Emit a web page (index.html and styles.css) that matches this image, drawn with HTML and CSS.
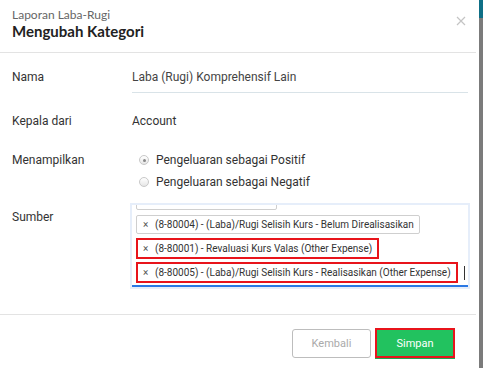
FILE: index.html
```html
<!DOCTYPE html>
<html lang="id">
<head>
<meta charset="utf-8">
<link rel="stylesheet" href="styles.css">
</head>
<body>
<div class="page">
  <div class="modal">
    <div class="modal-header">
      <div class="titles">
        <div class="subtitle">Laporan Laba-Rugi</div>
        <div class="title">Mengubah Kategori</div>
      </div>
      <svg class="close" width="10" height="10" viewBox="0 0 10 10"><path d="M1 1L9 9M9 1L1 9" stroke="#c4c4c4" stroke-width="1.2"/></svg>
    </div>
    <div class="modal-body">
      <div class="row row-nama">
        <div class="label">Nama</div>
        <div class="input">Laba (Rugi) Komprehensif Lain</div>
      </div>
      <div class="row row-kepala">
        <div class="label">Kepala dari</div>
        <div class="value">Account</div>
      </div>
      <div class="row row-tampil">
        <div class="label">Menampilkan</div>
        <div class="radios">
          <div class="radio-line"><span class="radio checked"></span>Pengeluaran sebagai Positif</div>
          <div class="radio-line"><span class="radio"></span>Pengeluaran sebagai Negatif</div>
        </div>
      </div>
      <div class="row row-sumber">
        <div class="label">Sumber</div>
        <div class="tagbox">
          <div class="tags">
            <div class="tag tag-hidden"></div>
            <div class="tag"><span class="x">×</span>(8-80004) - (Laba)/Rugi Selisih Kurs - Belum Direalisasikan</div>
            <div class="tag hl"><span class="x">×</span>(8-80001) - Revaluasi Kurs Valas (Other Expense)</div>
            <div class="tag-line">
              <div class="tag hl"><span class="x">×</span>(8-80005) - (Laba)/Rugi Selisih Kurs - Realisasikan (Other Expense)</div>
              <span class="caret"></span>
            </div>
          </div>
        </div>
      </div>
    </div>
    <div class="modal-footer">
      <button class="btn btn-back">Kembali</button>
      <button class="btn btn-save">Simpan</button>
    </div>
  </div>
  <div class="strip"></div>
</div>
</body>
</html>
```
FILE: styles.css
```css
* { box-sizing: border-box; }
html, body { margin: 0; padding: 0; background: #fff; }
body { font-family: Roboto, "Liberation Sans", sans-serif; color: #333; }
.page { display: flex; width: 483px; height: 368px; overflow: hidden; }
.modal { width: 479px; height: 368px; background: #fff; display: flex; flex-direction: column; }
.strip { width: 4px; height: 368px; background: linear-gradient(#0e6f86 0, #0e6f86 18px, #7b7b7b 18px); }

.modal-header {
  height: 53px; margin-right: 3px;
  border-bottom: 1px solid #e3e3e3;
  display: flex; justify-content: space-between; align-items: flex-start;
  padding: 8px 8px 0 12px;
}
.subtitle { font-family: Lato, "Open Sans", sans-serif; font-size: 12px; color: #666; line-height: 14px; }
.title { font-family: Lato, "Open Sans", sans-serif; font-size: 15px; font-weight: 700; color: #222; line-height: 18px; }
.close { margin-top: 8px; margin-right: 2px; }

.modal-body { flex: 1; padding: 9px 11px 0 12px; font-size: 12px; }
.row { display: flex; }
.label { width: 120px; flex: none; color: #333; }
.row-nama .label { line-height: 30px; }
.input { flex: 1; height: 31px; line-height: 30px; border-bottom: 1px solid #d9e3e8; color: #444; }
.row-kepala { margin-top: 18px; line-height: 20px; }
.value { color: #333; }
.row-tampil { margin-top: 18px; }
.row-tampil .label { line-height: 22px; }
.radio-line { display: flex; align-items: center; height: 22px; padding-left: 7px; color: #333; }
.radio { width: 10px; height: 10px; border-radius: 50%; border: 1px solid #c8c8c8; background: linear-gradient(#fff, #e6e6e6); margin-right: 7px; position: relative; }
.radio.checked::after { content: ""; position: absolute; left: 2.5px; top: 2.5px; width: 3px; height: 3px; border-radius: 50%; background: #888; }

.row-sumber { margin-top: 12px; }
.row-sumber .label { line-height: 24px; }
.tagbox {
  width: 336px; height: 82px;
  box-shadow: 0 0 0 2px #e6eefa;
  border-bottom: 2px solid #2a78e4;
  overflow: hidden; padding: 0 4px;
}
.tags { margin-top: -14px; display: flex; flex-direction: column; align-items: flex-start; gap: 5px; }
.tag {
  height: 19px; line-height: 17px; border: 1px solid #cfcfcf; border-radius: 2px;
  padding: 0 5px 0 6px; font-size: 10px; color: #333; white-space: nowrap; background: #fff;
}
.tag .x { display: inline-block; width: 12px; font-size: 10px; color: #555; }
.tag-hidden { width: 141px; }
.tag.hl { height: 21px; border: 2px solid #e8141b; border-radius: 0; padding-left: 5px; }
.tags .tag.hl { margin-top: -1px; margin-bottom: -1px; }
.tag-line { display: flex; align-items: center; gap: 6px; }
.caret { width: 1px; height: 14px; background: #333; }

.modal-footer {
  height: 54px; margin-right: 3px; border-top: 1px solid #e3e3e3;
  display: flex; justify-content: flex-end; align-items: flex-start;
  padding: 14px 21px 0 0; gap: 4px;
}
.btn { height: 29px; font-family: Roboto, "Liberation Sans", sans-serif; font-size: 11px; border-radius: 3px; cursor: pointer; }
.btn-back { width: 79px; background: #fff; border: 1px solid #bdbdbd; color: #aaa; }
.btn-save { width: 80px; height: 30px; margin-top: -1px; background: #22c25f; color: #fff; border: 2px solid #e8141b; border-radius: 0; box-shadow: 0 1px 0 #1ca853; }
```
